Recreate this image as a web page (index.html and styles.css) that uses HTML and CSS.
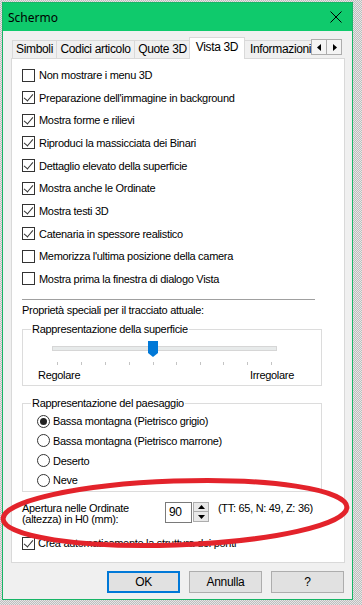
FILE: index.html
```html
<!DOCTYPE html>
<html lang="it">
<head>
<meta charset="utf-8">
<title>Schermo</title>
<link rel="stylesheet" href="styles.css">
</head>
<body>
<div class="window">
  <div class="titlebar">
    <span class="title">Schermo</span>
    <svg class="close" width="12" height="12" viewBox="0 0 12 12"><path d="M0.5 0.5 L11.5 11.5 M11.5 0.5 L0.5 11.5" stroke="#000" stroke-width="1" fill="none"/></svg>
  </div>
  <div class="content">
    <div class="tabrow">
      <div class="tabs">
        <div class="tab t1">Simboli</div>
        <div class="tab t2">Codici articolo</div>
        <div class="tab t3">Quote 3D</div>
        <div class="tab sel">Vista 3D</div>
        <div class="tab t5">Informazioni</div>
      </div>
      <div class="tabscroll">
        <div class="sbtn"><svg width="5" height="7" viewBox="0 0 5 7"><path d="M4 0 L0 3.5 L4 7 Z" fill="#000"/></svg></div>
        <div class="sbtn"><svg width="5" height="7" viewBox="0 0 5 7"><path d="M1 0 L5 3.5 L1 7 Z" fill="#000"/></svg></div>
      </div>
    </div>
    <div class="panel">
      <ul class="checks">
        <li><span class="cb"></span>Non mostrare i menu 3D</li>
        <li><span class="cb on"></span>Preparazione dell'immagine in background</li>
        <li><span class="cb on"></span>Mostra forme e rilievi</li>
        <li><span class="cb on"></span>Riproduci la massicciata dei Binari</li>
        <li><span class="cb on"></span>Dettaglio elevato della superficie</li>
        <li><span class="cb on"></span>Mostra anche le Ordinate</li>
        <li><span class="cb on"></span>Mostra testi 3D</li>
        <li><span class="cb on"></span>Catenaria in spessore realistico</li>
        <li><span class="cb"></span>Memorizza l'ultima posizione della camera</li>
        <li><span class="cb"></span>Mostra prima la finestra di dialogo Vista</li>
      </ul>
      <div class="sep"></div>
      <div class="props">Proprietà speciali per il tracciato attuale:</div>
      <fieldset class="group g1">
        <legend>Rappresentazione della superficie</legend>
        <svg class="slider" width="298" height="31" viewBox="0 0 298 31">
          <rect x="29.5" y="10.5" width="224" height="4" fill="#e7eaea" stroke="#d6d6d6"/>
          <g stroke="#c4c4c4" stroke-width="1">
            <path d="M34.5 26 V29 M58.5 26 V29 M82.5 26 V29 M106.5 26 V29 M130.5 26 V29 M153.5 26 V29 M177.5 26 V29 M200.5 26 V29 M224.5 26 V29 M248.5 26 V29"/>
          </g>
          <path d="M125 5 H135 V17 L130 21 L125 17 Z" fill="#0078d7"/>
        </svg>
        <div class="slabels"><span>Regolare</span><span>Irregolare</span></div>
      </fieldset>
      <fieldset class="group g2">
        <legend>Rappresentazione del paesaggio</legend>
        <ul class="radios">
          <li><span class="rb on"></span>Bassa montagna (Pietrisco grigio)</li>
          <li><span class="rb"></span>Bassa montagna (Pietrisco marrone)</li>
          <li><span class="rb"></span>Deserto</li>
          <li><span class="rb"></span>Neve</li>
        </ul>
      </fieldset>
      <div class="aperture">
        <div class="alabel">Apertura nelle Ordinate<br>(altezza) in H0 (mm):</div>
        <div class="spin">
          <div class="spinval">90</div>
          <div class="spinbtns">
            <div class="spb"><svg width="7" height="4" viewBox="0 0 7 4"><path d="M0 4 L3.5 0 L7 4 Z" fill="#000"/></svg></div>
            <div class="spb"><svg width="7" height="4" viewBox="0 0 7 4"><path d="M0 0 L3.5 4 L7 0 Z" fill="#000"/></svg></div>
          </div>
        </div>
        <div class="ainfo">(TT: 65, N: 49, Z: 36)</div>
      </div>
      <div class="crea"><span class="cb on"></span>Crea automaticamente la struttura dei ponti</div>
    </div>
    <div class="buttons">
      <div class="btn ok">OK</div>
      <div class="btn">Annulla</div>
      <div class="btn">?</div>
    </div>
  </div>
</div>
<svg class="mark" width="362" height="605" viewBox="0 0 362 605">
  <ellipse cx="175" cy="513" rx="172" ry="32" transform="rotate(-2 175 513)" fill="none" stroke="#e3232b" stroke-width="5"/>
</svg>
</body>
</html>
```

FILE: styles.css
```css
* { box-sizing: border-box; }
html, body { margin: 0; padding: 0; }
body {
  width: 362px;
  height: 605px;
  overflow: hidden;
  position: relative;
  background: repeating-conic-gradient(#bdbdbd 0 25%, #e6e6e6 0 50%) 0 0 / 2px 2px;
  font-family: "Liberation Sans", Arial, sans-serif;
  font-size: 11px;
  letter-spacing: -0.3px;
  color: #000;
}
.window {
  margin: 2px 0 0 2px;
  width: 351px;
  height: 598px;
  border: 1px solid #17b566;
  background: #f0f0f0;
  display: flex;
  flex-direction: column;
}
.titlebar {
  height: 28px;
  background: #0fca6c;
  display: flex;
  align-items: center;
  justify-content: space-between;
  padding: 0 10px 0 5px;
}
.title {
  font-family: "Noto Sans", "Open Sans", sans-serif;
  font-size: 12px;
  letter-spacing: 0;
}
.close { display: block; }
.content {
  padding: 6px 7px 0 8px;
  display: flex;
  flex-direction: column;
}
.tabrow {
  height: 21px;
  display: flex;
  align-items: flex-end;
  position: relative;
  z-index: 2;
}
.tabs {
  width: 300px;
  height: 22px;
  margin-bottom: -1px;
  display: flex;
  align-items: flex-end;
  overflow: hidden;
  padding-left: 1px;
  padding-bottom: 1px;
}
.tab {
  flex: none;
  height: 18px;
  border: 1px solid #d9d9d9;
  border-bottom: none;
  margin-right: -1px;
  background: #f0f0f0;
  font-size: 12px;
  letter-spacing: -0.35px;
  line-height: 17px;
  text-align: center;
  white-space: nowrap;
}
.t1 { width: 45px; }
.t2 { width: 79px; }
.t3 { width: 57px; }
.t5 { width: 70px; padding-left: 5px; text-align: left; }
.tab.sel {
  width: 56px;
  height: 22px;
  margin: 0 -1px -1px -1px;
  background: #fff;
  position: relative;
  z-index: 1;
  line-height: 18px;
}
.tabscroll {
  align-self: flex-start;
  margin-top: 2px;
  display: flex;
}
.sbtn {
  width: 16px;
  height: 16px;
  border: 1px solid #adadad;
  margin-right: -1px;
  background: #f4f4f4;
  display: flex;
  align-items: center;
  justify-content: center;
}
.panel {
  width: 334px;
  height: 505px;
  border: 1px solid #d9d9d9;
  background: #fff;
  padding: 4.7px 0 0 10px;
  position: relative;
  z-index: 1;
}
.checks, .radios {
  list-style: none;
  margin: 0;
  padding: 0;
}
.checks li {
  height: 22.67px;
  display: flex;
  align-items: center;
  white-space: nowrap;
}
.cb {
  flex: none;
  width: 13px;
  height: 13px;
  border: 1px solid #333;
  background: #fff;
  margin-right: 4px;
  position: relative;
}
.cb.on::after {
  content: "";
  position: absolute;
  left: 3px;
  top: 0px;
  width: 4px;
  height: 8px;
  border-right: 1px solid #333;
  border-bottom: 1px solid #333;
  transform: rotate(40deg);
}
.sep {
  margin-top: 8.6px;
  width: 293px;
  height: 1px;
  background: #a0a0a0;
}
.props {
  margin-top: 4.5px;
  line-height: 13px;
  height: 13px;
}
.group {
  margin: 0;
  width: 300px;
  border: 1px solid #dcdcdc;
  padding: 0;
  min-width: 0;
}
.group legend {
  margin-left: 8px;
  padding: 0 1px;
  line-height: 13px;
  height: 13px;
}
.g1 { margin-top: 6px; height: 62.5px; }
.slider { display: block; margin-top: 0px; }
.slabels {
  display: flex;
  justify-content: space-between;
  padding: 0 27px 0 15px;
  line-height: 13px;
  margin-top: 1.5px;
}
.g2 { margin-top: 11px; height: 95px; }
.radios { padding-top: 1.5px; }
.radios li {
  height: 19.7px;
  display: flex;
  align-items: center;
  padding-left: 14px;
  white-space: nowrap;
}
.rb {
  flex: none;
  width: 13px;
  height: 13px;
  border: 1px solid #333;
  border-radius: 50%;
  margin-right: 3px;
  background: #fff;
  display: flex;
  align-items: center;
  justify-content: center;
}
.rb.on::after {
  content: "";
  width: 7px;
  height: 7px;
  border-radius: 50%;
  background: #222;
}
.aperture {
  margin-top: 11.5px;
  display: flex;
  align-items: flex-start;
}
.alabel {
  width: 143px;
  line-height: 11px;
}
.spin {
  margin-top: -1.5px;
  display: flex;
}
.spinval {
  width: 27px;
  height: 21px;
  border: 1px solid #7a7a7a;
  padding: 0 0 0 3px;
  line-height: 19px;
  font-size: 12px;
}
.spinbtns {
  display: flex;
  flex-direction: column;
  margin-left: 1px;
}
.spb {
  width: 16px;
  height: 10.5px;
  border: 1px solid #adadad;
  background: #e9e9e9;
  display: flex;
  align-items: center;
  justify-content: center;
}
.spb + .spb { margin-top: -1px; }
.ainfo {
  margin-left: 9px;
  line-height: 11px;
}
.crea {
  margin-top: 11.5px;
  display: flex;
  align-items: center;
  height: 13px;
  white-space: nowrap;
}
.crea .cb { margin-right: 3px; }
.buttons {
  margin-top: 8px;
  display: flex;
  justify-content: flex-end;
  gap: 9px;
  padding-right: 1px;
}
.btn {
  width: 73px;
  height: 22px;
  border: 1px solid #adadad;
  background: #e1e1e1;
  display: flex;
  align-items: center;
  justify-content: center;
  font-size: 12px;
}
.btn.ok {
  border: 2px solid #0078d7;
}
.mark {
  position: absolute;
  left: 0;
  top: 0;
  z-index: 10;
  pointer-events: none;
}
```
